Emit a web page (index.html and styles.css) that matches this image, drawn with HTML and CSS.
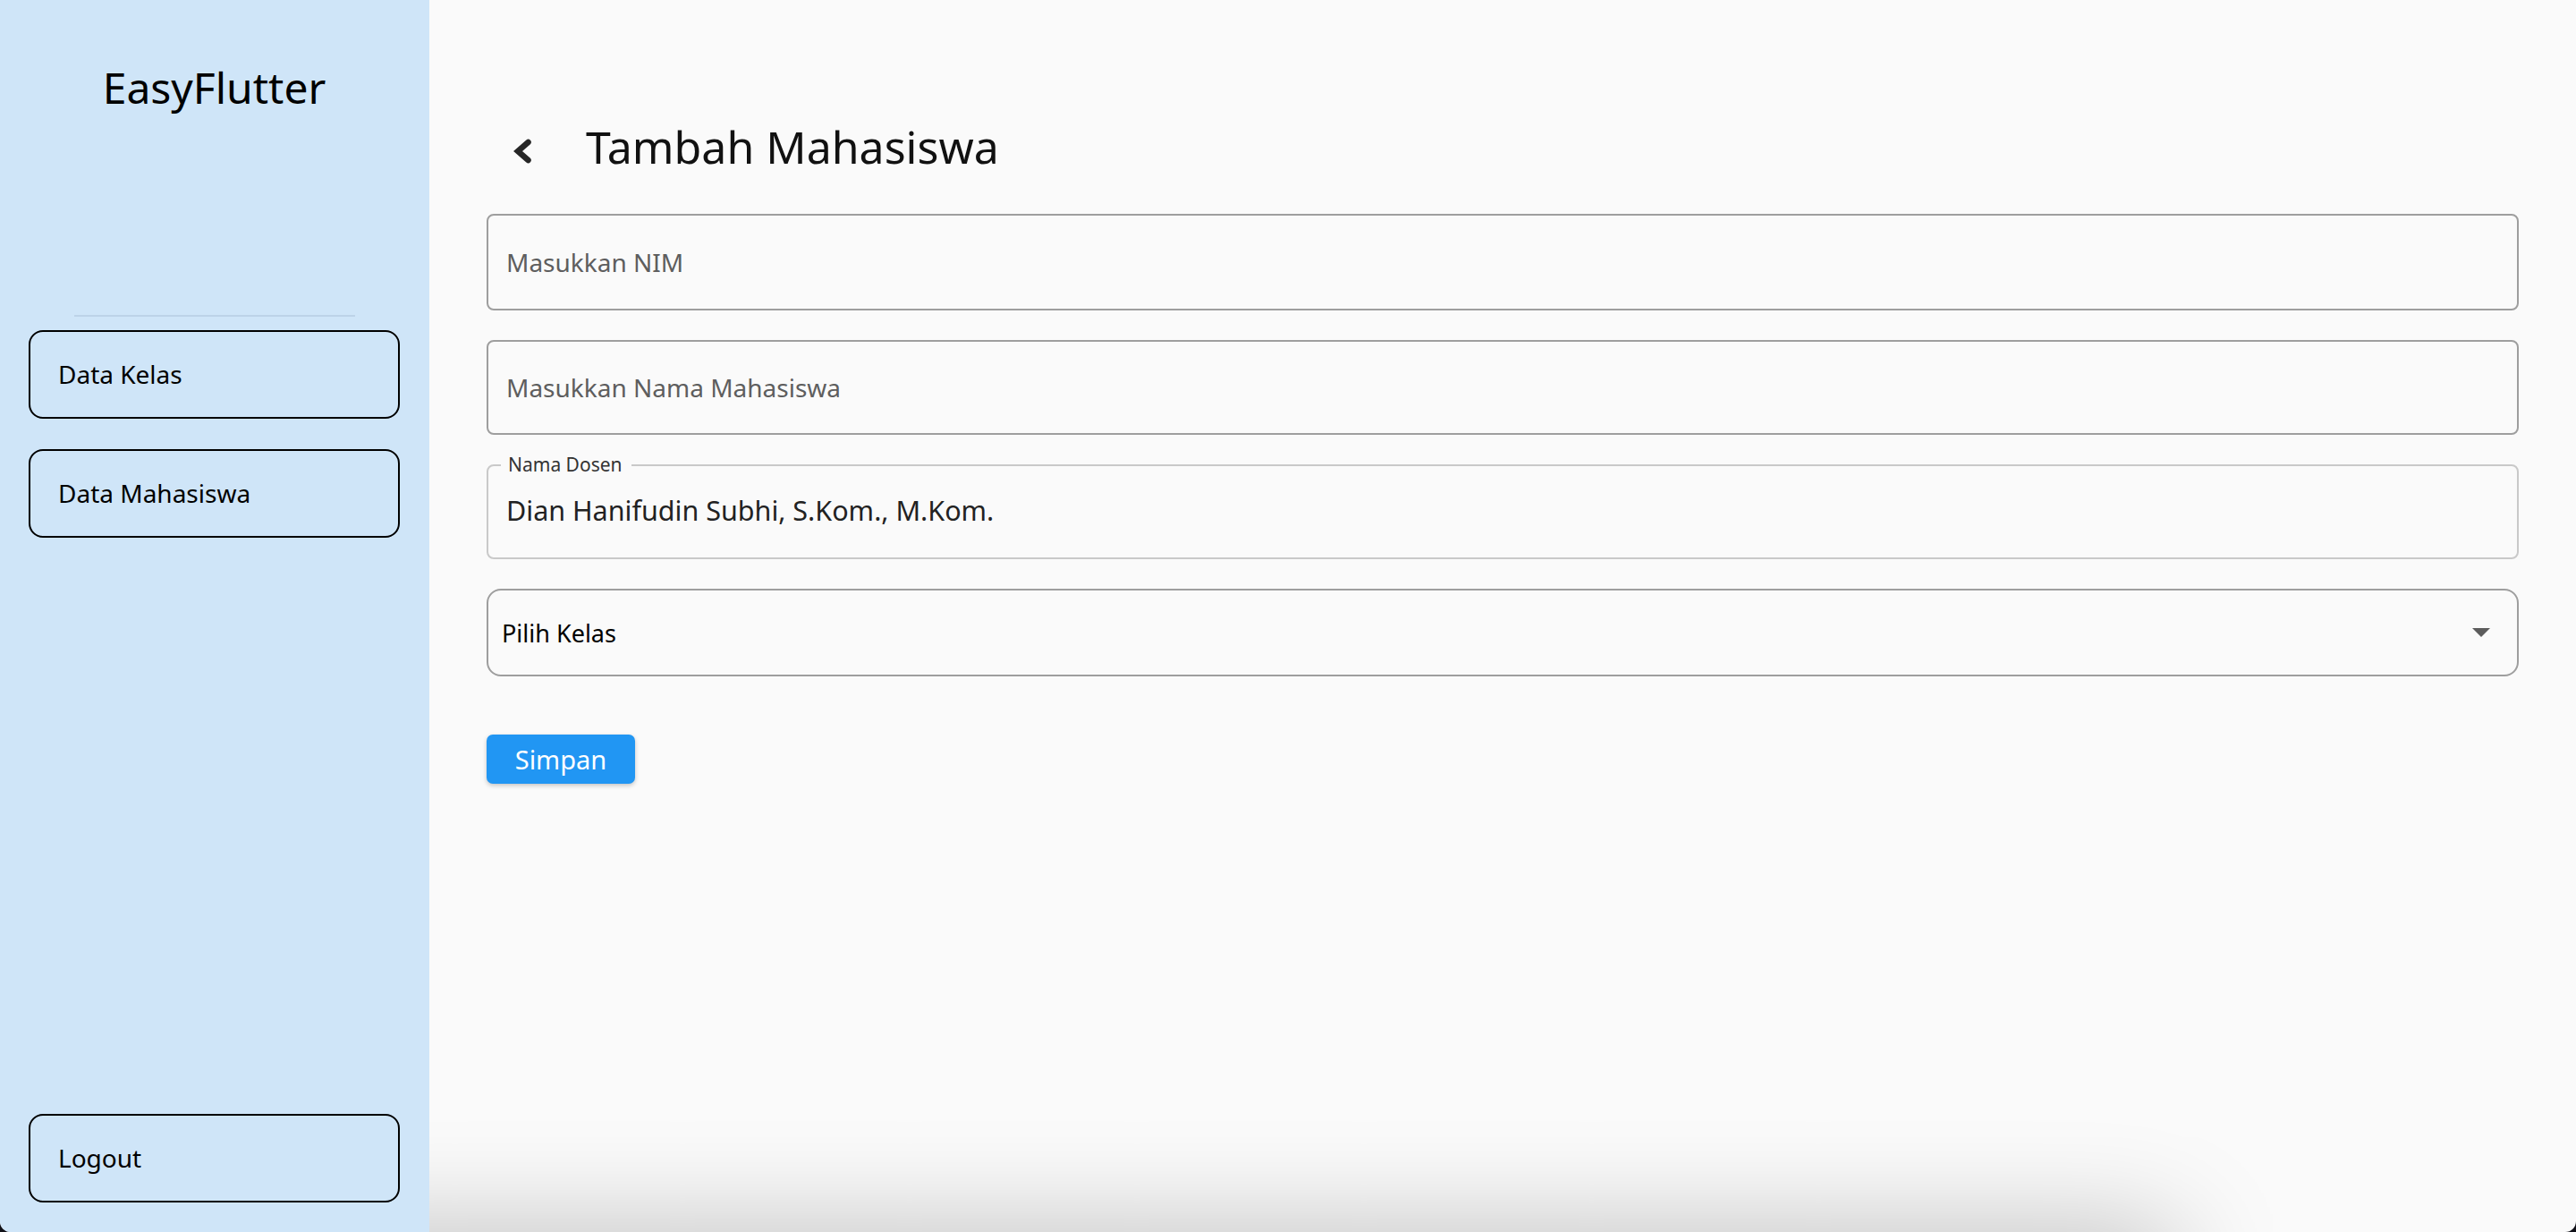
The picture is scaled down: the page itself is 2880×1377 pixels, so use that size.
FILE: index.html
```html
<!DOCTYPE html>
<html lang="id">
<head>
<meta charset="utf-8">
<title>EasyFlutter - Tambah Mahasiswa</title>
<link rel="stylesheet" href="styles.css">
</head>
<body>
<div class="app">
  <aside class="sidebar">
    <div class="brand">EasyFlutter</div>
    <div class="divider"></div>
    <nav class="nav">
      <a class="nav-btn">Data Kelas</a>
      <a class="nav-btn">Data Mahasiswa</a>
    </nav>
    <a class="nav-btn logout">Logout</a>
  </aside>
  <main class="main">
    <header class="page-head">
      <button class="back" type="button" aria-label="Kembali">
        <svg width="22" height="28" viewBox="0 0 22 28"><polyline points="17.5,4 6,14 17.5,24" fill="none" stroke="#262626" stroke-width="6.5" stroke-linecap="round" stroke-linejoin="miter"/></svg>
      </button>
      <h1 class="page-title">Tambah Mahasiswa</h1>
    </header>
    <form class="form">
      <div class="field f-nim"><input class="field-input" placeholder="Masukkan NIM"></div>
      <div class="field f-nama"><input class="field-input" placeholder="Masukkan Nama Mahasiswa"></div>
      <div class="field f-dosen disabled">
        <span class="float-label">Nama Dosen</span>
        <input class="field-input value" value="Dian Hanifudin Subhi, S.Kom., M.Kom." disabled>
      </div>
      <div class="field select">
        <span class="select-text">Pilih Kelas</span>
        <svg class="select-arrow" width="20" height="10" viewBox="0 0 20 10"><path d="M0 0H20L10 10Z" fill="#5c5c5c"/></svg>
      </div>
      <button class="btn-primary" type="button">Simpan</button>
    </form>
    <div class="bottom-shade"></div>
  </main>
</div>
</body>
</html>
```

FILE: styles.css
```css
html {
  background: #111118;
}

body {
  margin: 0;
  font-family: "Noto Sans", "Open Sans", sans-serif;
}

.app {
  display: flex;
  width: 2880px;
  height: 1377px;
  border-radius: 0 0 12px 12px;
  overflow: hidden;
  background: #fafafa;
}

/* Sidebar */
.sidebar {
  width: 480px;
  flex: none;
  box-sizing: border-box;
  background: #cfe5f8;
  display: flex;
  flex-direction: column;
  padding: 0 33px 33px 32px;
  position: relative;
  z-index: 1;
}

.brand {
  height: 194px;
  display: flex;
  align-items: center;
  justify-content: center;
  font-size: 48px;
  color: #000;
}

.divider {
  width: 314px;
  height: 2px;
  margin: 158px auto 0;
  background: #bdd3e8;
}

.nav {
  display: flex;
  flex-direction: column;
  gap: 34px;
  margin-top: 15px;
}

.nav-btn {
  height: 99px;
  box-sizing: border-box;
  border: 2px solid #000;
  border-radius: 16px;
  display: flex;
  align-items: center;
  padding-left: 31px;
  padding-bottom: 2px;
  font-size: 28px;
  color: #000;
  cursor: pointer;
}

.logout {
  margin-top: auto;
}

/* Main */
.main {
  flex: 1;
  position: relative;
  overflow: hidden;
  box-sizing: border-box;
  padding: 136px 64px 0;
}

.page-head {
  display: flex;
  align-items: center;
  height: 56px;
  margin-bottom: 47px;
}

.back {
  border: none;
  background: none;
  padding: 0;
  margin: 10px 0 0 29px;
  display: flex;
  cursor: pointer;
}

.page-title {
  margin: 0 0 0 60px;
  font-size: 50px;
  font-weight: 400;
  color: #111;
}

.form {
  display: flex;
  flex-direction: column;
  gap: 33px;
}

.field {
  position: relative;
  box-sizing: border-box;
  border: 2px solid #9e9e9e;
  border-radius: 8px;
  display: flex;
  align-items: center;
}

.f-nim { height: 108px; }
.f-nama { height: 106px; }
.f-dosen { height: 106px; }

.field-input {
  width: 100%;
  border: none;
  outline: none;
  background: transparent;
  padding: 0 20px;
  font-family: "Noto Sans", "Open Sans", sans-serif;
  font-size: 28px;
  color: #212121;
}

.field-input::placeholder {
  color: #5e5e5e;
}

.field.disabled {
  border-color: #c9c9c9;
}

.field-input.value {
  margin-top: -5px;
  font-size: 30.5px;
  color: #222;
  -webkit-text-fill-color: #222;
}

.float-label {
  position: absolute;
  left: 14px;
  top: -12px;
  padding: 0 10px 0 8px;
  background: #fafafa;
  font-size: 21px;
  line-height: 1;
  color: #333;
}

.field.select {
  height: 98px;
  border-radius: 16px;
  justify-content: space-between;
  padding: 0 30px 0 15px;
  font-size: 27px;
  color: #000;
}

.select-arrow {
  display: block;
}

.btn-primary {
  align-self: flex-start;
  margin-top: 32px;
  width: 166px;
  height: 55px;
  padding: 0;
  border: none;
  border-radius: 7px;
  background: #2196f3;
  color: #fff;
  font-family: "Noto Sans", "Open Sans", sans-serif;
  font-size: 29px;
  box-shadow: 0 2px 5px rgba(0, 0, 0, 0.22);
  cursor: pointer;
}

.bottom-shade {
  position: absolute;
  left: -200px;
  top: 100%;
  width: 2152px;
  height: 100px;
  box-shadow: 0 0 120px rgba(0, 0, 0, 0.26);
  pointer-events: none;
}
```
